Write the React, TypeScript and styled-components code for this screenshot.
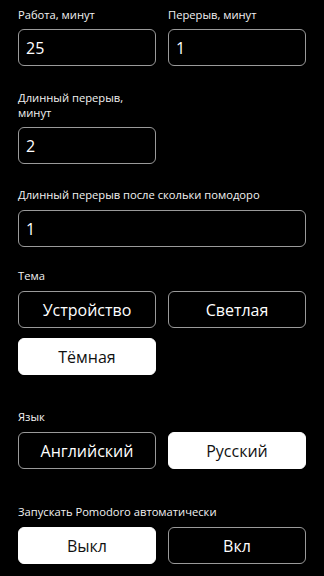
import React from "react";
import styled, { createGlobalStyle } from "styled-components";

const Global = createGlobalStyle`
  html, body { margin: 0; padding: 0; background: #000; }
  body { font-family: "Open Sans", "Noto Sans", sans-serif; color: #fff; }
  * { box-sizing: border-box; }
`;

const Page = styled.div`
  width: 324px;
  min-height: 576px;
  background: #000;
  padding: 7px 18px 12px;
  display: flex;
  flex-direction: column;
`;

const Grid = styled.div<{ $mt?: number }>`
  display: grid;
  grid-template-columns: 1fr 1fr;
  column-gap: 12px;
  row-gap: 10px;
  margin-top: ${(p) => p.$mt ?? 0}px;
`;

const Field = styled.div<{ $full?: boolean }>`
  display: flex;
  flex-direction: column;
  grid-column: ${(p) => (p.$full ? "1 / -1" : "auto")};
`;

const Label = styled.label<{ $mb?: number }>`
  font-size: 11.2px;
  line-height: 15px;
  color: #f2f2f2;
  margin-bottom: ${(p) => p.$mb ?? 7}px;
`;

const SectionLabel = styled.div<{ $mt: number }>`
  font-size: 11.2px;
  line-height: 15px;
  color: #f2f2f2;
  margin-top: ${(p) => p.$mt}px;
  margin-bottom: 8px;
`;

const Input = styled.input`
  height: 37px;
  width: 100%;
  background: #000;
  border: 1px solid #9a9a9a;
  border-radius: 6px;
  color: #fff;
  font-family: inherit;
  font-size: 16px;
  padding: 0 7px;
  outline: none;
`;

const Option = styled.button<{ $active?: boolean }>`
  height: 37px;
  border-radius: 6px;
  border: 1px solid ${(p) => (p.$active ? "#fff" : "#9a9a9a")};
  background: ${(p) => (p.$active ? "#fff" : "#000")};
  color: ${(p) => (p.$active ? "#111" : "#fff")};
  font-family: inherit;
  font-size: 16px;
  padding: 0;
  display: flex;
  align-items: center;
  justify-content: center;
`;

export default function App() {
  return (
    <>
      <Global />
      <Page>
        <Grid>
          <Field>
            <Label>Работа, минут</Label>
            <Input defaultValue="25" />
          </Field>
          <Field>
            <Label>Перерыв, минут</Label>
            <Input defaultValue="1" />
          </Field>
        </Grid>
        <Grid $mt={24}>
          <Field>
            <Label>Длинный перерыв, минут</Label>
            <Input defaultValue="2" />
          </Field>
        </Grid>
        <Grid $mt={23}>
          <Field $full>
            <Label $mb={8}>Длинный перерыв после скольки помодоро</Label>
            <Input defaultValue="1" />
          </Field>
        </Grid>

        <SectionLabel $mt={21}>Тема</SectionLabel>
        <Grid>
          <Option>Устройство</Option>
          <Option>Светлая</Option>
          <Option $active>Тёмная</Option>
        </Grid>

        <SectionLabel $mt={34}>Язык</SectionLabel>
        <Grid>
          <Option>Английский</Option>
          <Option $active>Русский</Option>
        </Grid>

        <SectionLabel $mt={35}>Запускать Pomodoro автоматически</SectionLabel>
        <Grid>
          <Option $active>Выкл</Option>
          <Option>Вкл</Option>
        </Grid>
      </Page>
    </>
  );
}
